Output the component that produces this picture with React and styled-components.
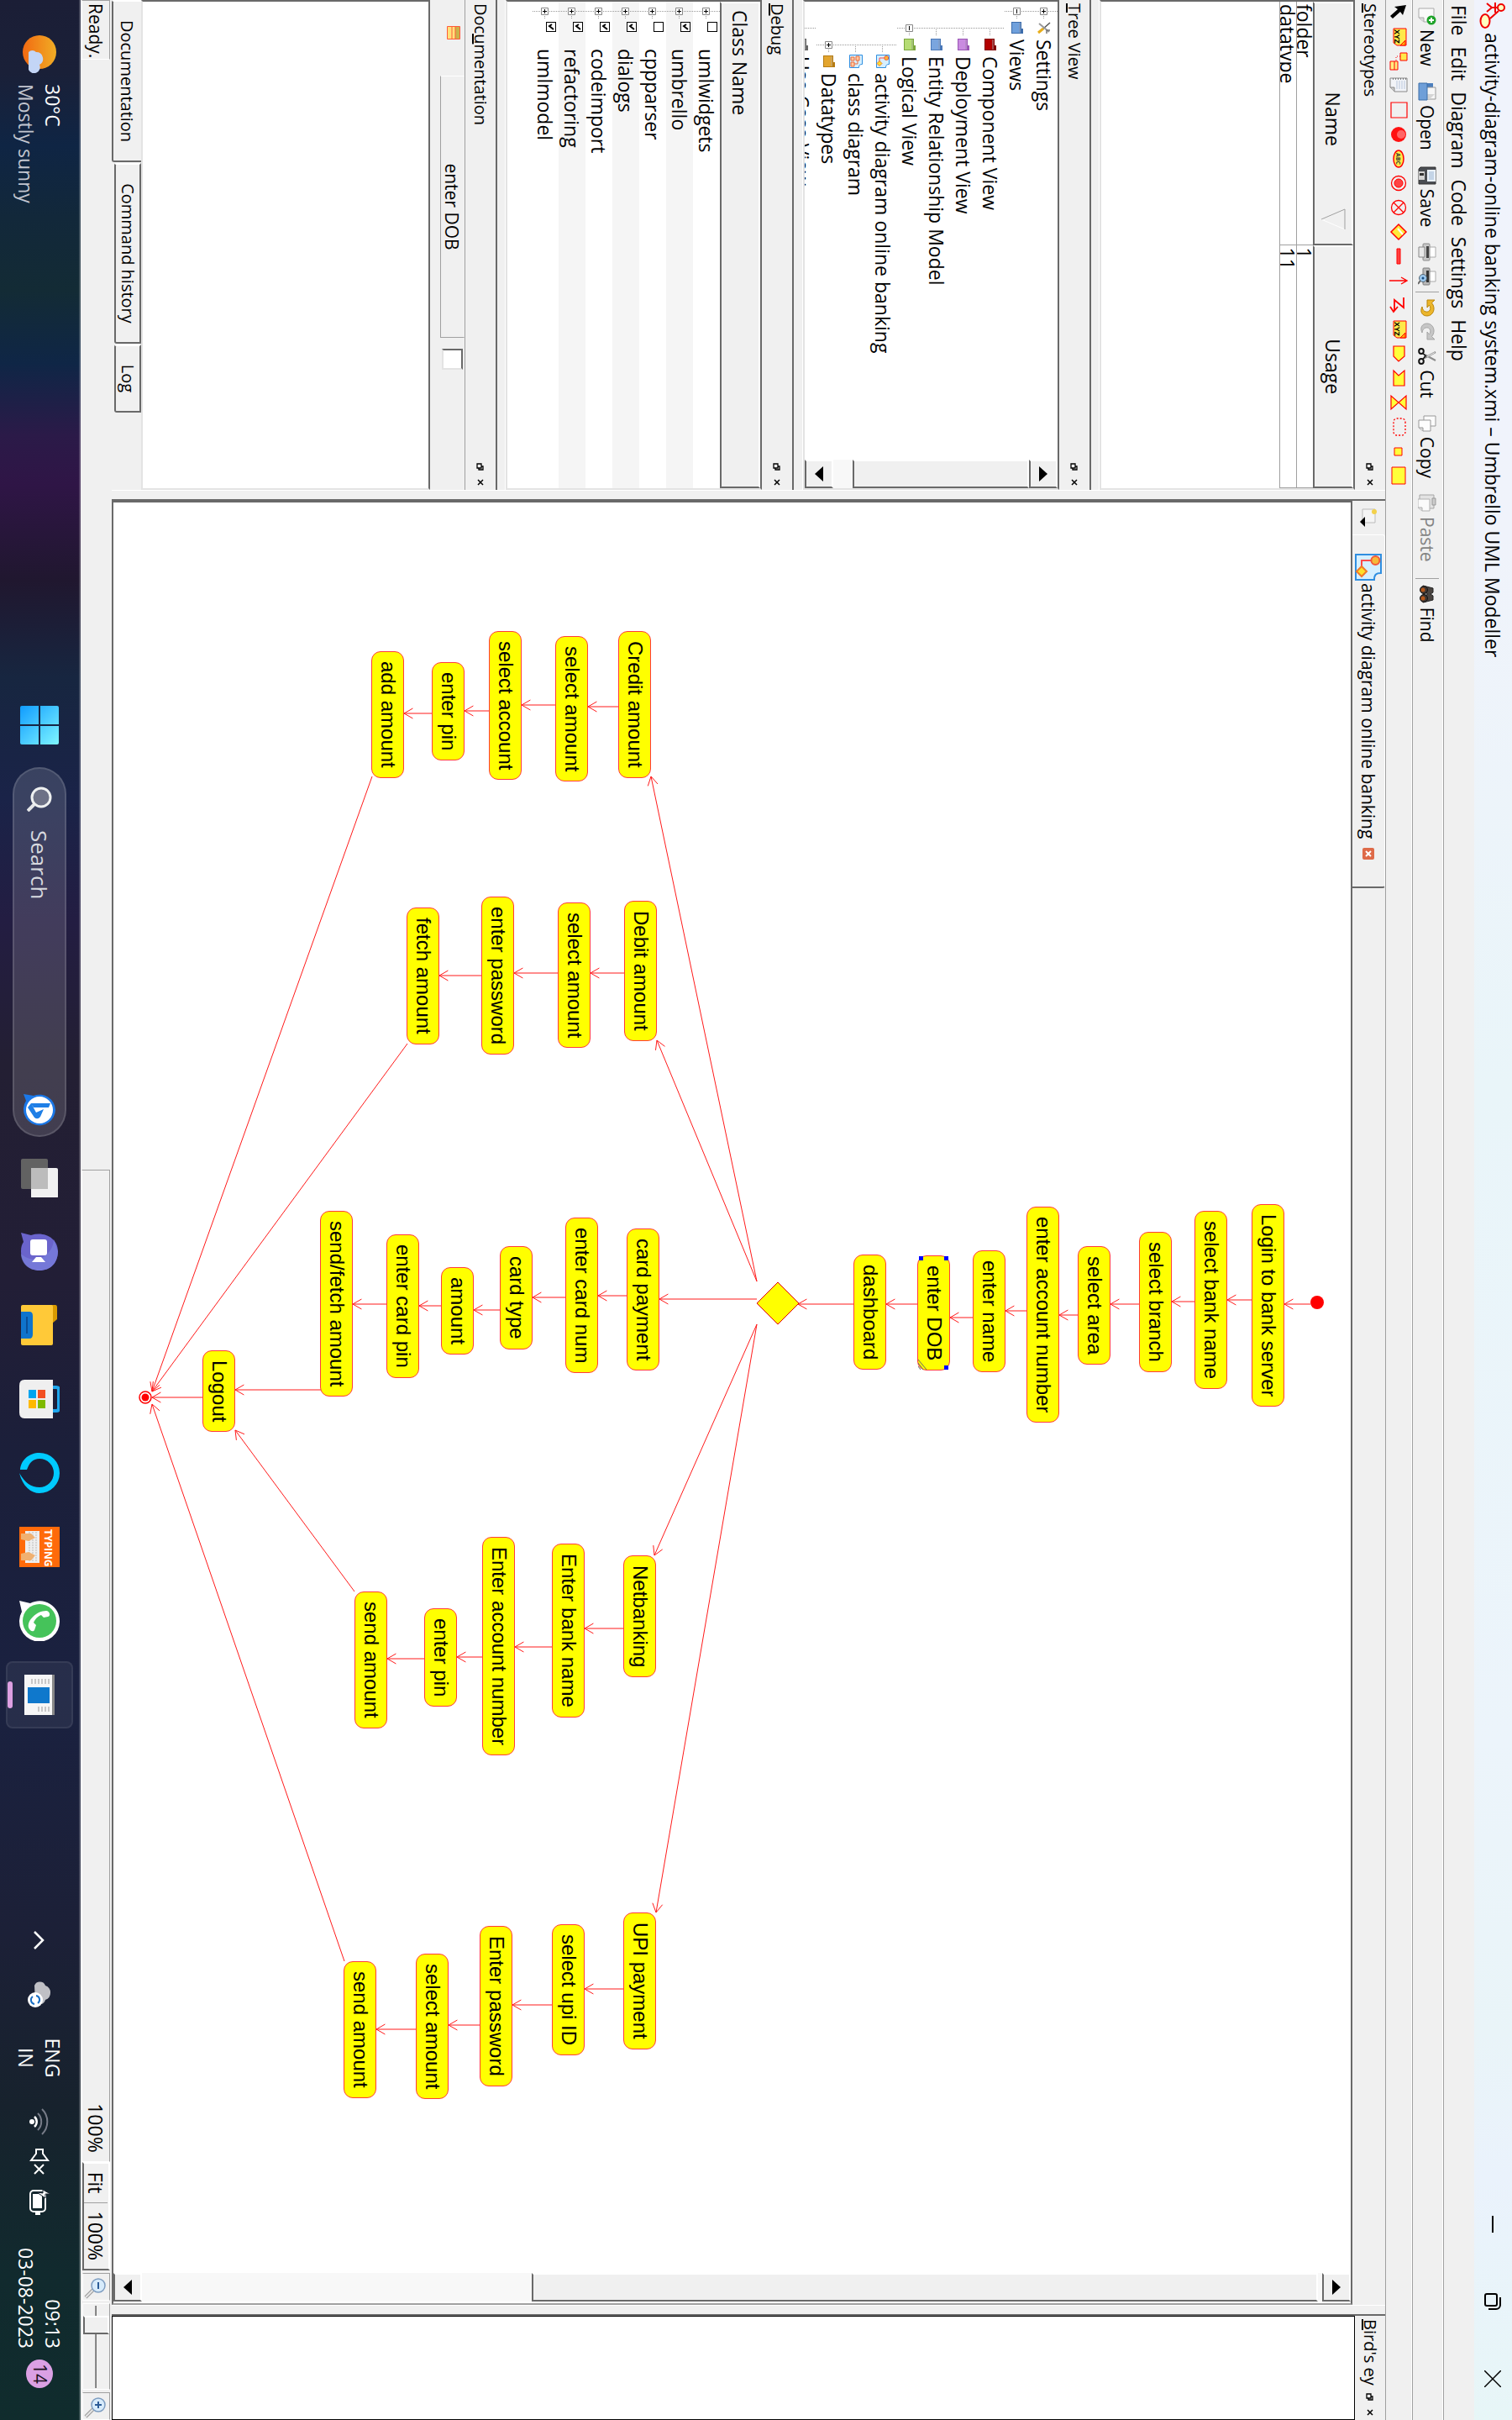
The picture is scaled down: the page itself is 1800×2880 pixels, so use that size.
import React from "react";
import styled, { createGlobalStyle, css } from "styled-components";

const ui = `"Open Sans", "Noto Sans", sans-serif`;
const diagramFont = `"Liberation Sans", Arial, sans-serif`;
const size = { tiny: "20px", small: "21px", base: "23px", large: "26px" };
const c = {
  face: "#f0f0f0",
  light: "#ffffff",
  soft: "#e3e3e3",
  shade: "#a0a0a0",
  dark: "#696969",
};

const GlobalStyle = createGlobalStyle`
  *, *::before, *::after { box-sizing: border-box; }
  html, body { margin: 0; background: ${c.face}; }
  button, input, textarea { font: inherit; color: inherit; margin: 0; padding: 0; border: 0; border-radius: 0; background: none; }
  svg { display: block; flex: none; }
`;

const sunken = css`
  border: 2px solid;
  border-color: ${c.dark} ${c.soft} ${c.soft} ${c.dark};
`;
const raised = css`
  border: 2px solid;
  border-color: ${c.light} ${c.dark} ${c.dark} ${c.light};
  background: ${c.face};
`;

/* ---------- frame of the turned display ---------- */
const Viewport = styled.div`
  width: 100vw;
  height: 100vh;
  overflow: hidden;
`;
const Screen = styled.div`
  width: 100vh;
  height: 100vw;
  transform-origin: 0 0;
  transform: rotate(90deg) translateY(-100%);
  display: flex;
  flex-direction: column;
  font-family: ${ui};
  font-size: ${size.base};
  line-height: 32px;
  color: #000;
  background: ${c.face};
  white-space: nowrap;
`;

/* ---------- title, menu and tool bars ---------- */
const TitleBar = styled.header`
  flex: none;
  height: 45px;
  display: flex;
  align-items: center;
  gap: 5px;
  padding: 0 3px 0 2px;
  background: linear-gradient(90deg, #f0f3fc 0%, #f0f3fb 22%, #e9f5f9 45%, #ecf4fb 72%, #e9f4f8 84%, #eaf2fc 90%, #e7f6f7 100%);
`;
const TitleText = styled.h1`
  flex: 1;
  margin: 0;
  font-size: ${size.base};
  font-weight: 400;
`;
const CaptionGroup = styled.div`
  display: flex;
`;
const CaptionButton = styled.button`
  width: 92px;
  height: 44px;
  display: grid;
  place-items: center;
`;
const MenuBar = styled.nav`
  flex: none;
  height: 37px;
  display: flex;
  align-items: center;
  gap: 13px;
  padding: 0 6px;
  border-bottom: 1px solid ${c.shade};
`;
const ToolBar = styled.div`
  flex: none;
  height: ${(p) => p.$height}px;
  display: flex;
  align-items: center;
  gap: 7px;
  padding: 0 ${(p) => p.$pad}px;
  border-top: 1px solid ${c.light};
  border-bottom: 1px solid ${c.shade};
`;
const ToolButton = styled.button`
  display: flex;
  align-items: center;
  gap: 5px;
  padding-right: ${(p) => (p.$labelled ? 12 : 0)}px;
  font-size: ${size.small};
  color: ${(p) => (p.disabled ? "#838383" : "#000")};
`;
const ToolSeparator = styled.span`
  width: 1px;
  height: 28px;
  background: ${c.shade};
`;

/* ---------- docks ---------- */
const Workspace = styled.main`
  flex: 1;
  min-height: 0;
  display: grid;
  grid-template-columns: 583px 11px minmax(0, 1fr) 11px 126px;
`;
const VSplitter = styled.div`
  border-left: 1px solid ${c.light};
`;
const LeftDocks = styled.aside`
  display: grid;
  min-height: 0;
  grid-template-rows:
    minmax(0, 340fr) 12px minmax(0, 341fr) 13px
    minmax(0, 341fr) 12px minmax(0, 457fr);
`;
const HSplitter = styled.div`
  border-top: 1px solid ${c.light};
  border-bottom: 2px solid ${c.dark};
`;
const DockBox = styled.section`
  display: flex;
  flex-direction: column;
  min-height: 0;
  min-width: 0;
`;
const DockTitle = styled.div`
  flex: none;
  height: 36px;
  display: flex;
  align-items: center;
  padding: 0 4px;
  gap: 9px;
`;
const DockName = styled.h2`
  flex: 1;
  margin: 0;
  min-width: 0;
  font-size: ${size.tiny};
  font-weight: 400;
`;
const IconButton = styled.button`
  display: grid;
  place-items: center;
  width: 10px;
  height: 20px;
`;
const Pane = styled.div`
  flex: 1;
  min-height: 0;
  display: flex;
  flex-direction: ${(p) => (p.$row ? "row" : "column")};
  background: #fff;
  overflow: hidden;
  ${sunken}
`;
const StereoTable = styled.table`
  width: 100%;
  table-layout: fixed;
  border-collapse: separate;
  border-spacing: 0;
`;
const HeadCell = styled.th`
  height: 48px;
  padding: 0;
  width: 50%;
  font-weight: 400;
  ${raised}
`;
const HeadInner = styled.div`
  display: grid;
  grid-template-columns: 32px 1fr 32px;
  align-items: center;
  padding-right: 10px;
`;
const BodyCell = styled.td`
  height: 20px;
  padding: 0 3px;
  line-height: 20px;
  border-bottom: 1px solid ${c.shade};
  border-right: 1px solid ${c.shade};
`;
const CellText = styled.div`
  height: 19px;
  overflow: hidden;
`;
const TreeList = styled.ul`
  flex: 1;
  margin: 0;
  padding: 0;
  list-style: none;
`;
const TreeRow = styled.li`
  height: 32px;
  display: flex;
  align-items: center;
  padding-left: ${(p) => 2 + p.$level * 20}px;
`;
const TreeIcon = styled.span`
  width: 22px;
  margin-left: 2px;
`;
const ClassHeader = styled.div`
  flex: none;
  height: 48px;
  display: flex;
  align-items: center;
  padding-left: 8px;
  ${raised}
`;
const ClassRow = styled.label`
  height: 32px;
  display: flex;
  align-items: center;
  padding-left: 2px;
  background: ${(p) => (p.$alt ? "#f5f5f5" : "#fff")};
`;
const CheckWrap = styled.span`
  display: grid;
  margin: 0 20px 14px 3px;
  & > * { grid-area: 1 / 1; place-self: center; }
`;
const Check = styled.input`
  appearance: none;
  width: 12px;
  height: 12px;
  border: 1px solid #000;
  background: #fff;
  & + svg { visibility: hidden; pointer-events: none; }
  &:checked + svg { visibility: visible; }
`;
const DocHeader = styled.div`
  flex: none;
  height: 42px;
  display: flex;
  align-items: flex-start;
  padding-left: 31px;
  border-top: 1px solid ${c.shade};
`;
const DocIcon = styled.span`
  padding-top: 5px;
  width: 59px;
`;
const DocName = styled.div`
  width: 312px;
  height: 29px;
  line-height: 28px;
  margin-right: 13px;
  text-align: center;
  font-size: ${size.small};
  border: 1px solid;
  border-color: transparent ${c.shade} ${c.shade} ${c.light};
`;
const DocFlag = styled.input`
  appearance: none;
  width: 25px;
  height: 25px;
  margin-top: 2px;
  background: #fff;
  ${sunken}
`;
const DocText = styled.textarea`
  flex: 1;
  width: 100%;
  resize: none;
  background: #fff;
  ${sunken}
`;
const DockTabs = styled.div`
  flex: none;
  height: 35px;
  display: flex;
  align-items: flex-start;
  gap: 1px;
`;
const DockTab = styled.button`
  height: ${(p) => (p.$active ? 35 : 32)}px;
  padding: 0 22px;
  line-height: 28px;
  font-size: ${size.tiny};
  border: 2px solid ${c.dark};
  border-top-width: ${(p) => (p.$active ? 0 : 2)}px;
  border-left-color: ${c.light};
  border-radius: 0 0 3px 3px;
`;

/* ---------- scroll bars ---------- */
const ScrollColumn = styled.div`
  flex: none;
  width: 34px;
  display: flex;
  flex-direction: column;
  background: #f8f8f8;
`;
const ScrollButton = styled.button`
  flex: none;
  height: 34px;
  display: grid;
  place-items: center;
  ${raised}
`;
const ScrollThumb = styled.div`
  flex: ${(p) => p.$part};
  margin-top: ${(p) => p.$top}px;
  ${raised}
`;
const ScrollRest = styled.div`
  flex: ${(p) => p.$part};
`;

/* ---------- diagram ---------- */
const Center = styled.section`
  display: flex;
  flex-direction: column;
  min-height: 0;
  border-left: 2px solid ${c.dark};
`;
const TabStrip = styled.div`
  flex: none;
  height: 39px;
  display: flex;
  align-items: stretch;
`;
const NewDiagram = styled.button`
  width: 40px;
  display: grid;
  place-items: center;
`;
const DiagramTab = styled.div`
  width: 421px;
  display: flex;
  align-items: center;
  padding-left: 22px;
  gap: 3px;
  font-size: ${size.small};
  border-top: 1px solid ${c.light};
  border-left: 1px solid ${c.light};
  border-right: 2px solid ${c.dark};
  border-radius: 3px 3px 0 0;
`;
const CloseTab = styled.button`
  margin-left: 8px;
  width: 14px;
  height: 14px;
`;
const CanvasFrame = styled.div`
  flex: 1;
  min-height: 0;
  display: flex;
  padding-right: 2px;
  border: 2px solid;
  border-color: ${c.dark} ${c.shade} ${c.dark} ${c.dark};
  background: #fff;
`;
const Canvas = styled.div`
  position: relative;
  flex: 1;
  overflow: hidden;
  font-family: ${diagramFont};
  font-size: 24px;
`;
const Edges = styled.svg`
  position: absolute;
  inset: 0;
  overflow: visible;
`;
const Activity = styled.div`
  position: absolute;
  left: ${(p) => p.$x - 598}px;
  top: ${(p) => p.$y - 192}px;
  height: 39px;
  padding: 0 11px;
  line-height: 36px;
  border: 1px solid #ff3b3b;
  border-radius: 11px;
  background: #ffff00;
`;
const Handle = styled.i`
  position: absolute;
  width: 5px;
  height: 5px;
  background: #00f;
  ${(p) => p.$v}: 1px;
  ${(p) => p.$h}: 0;
`;
const Grip = styled.svg`
  position: absolute;
  right: 0;
  bottom: 0;
`;

const BirdView = styled.div`
  flex: 1;
  background: #fff;
  border: 1px solid #000;
`;
const BirdDock = styled(DockBox)`
  border-left: 2px solid ${c.dark};
`;

/* ---------- status bar ---------- */
const StatusBar = styled.footer`
  flex: none;
  height: 37px;
  display: flex;
  align-items: center;
  gap: 3px;
  padding: 2px 0;
`;
const StatusField = styled.div`
  height: 34px;
  display: flex;
  align-items: center;
  justify-content: ${(p) => (p.$end ? "flex-end" : "flex-start")};
  padding: 0 ${(p) => (p.$end ? 10 : 1)}px 0 3px;
  margin-left: ${(p) => (p.$end ? "auto" : 0)};
  width: ${(p) => (p.$end ? "41%" : "auto")};
  font-size: ${(p) => (p.$end ? size.base : size.small)};
  border: 1px solid;
  border-color: ${c.shade} ${c.light} ${c.light} ${c.shade};
`;
const ZoomGroup = styled.div`
  height: 33px;
  display: flex;
  align-items: center;
  gap: 10px;
  padding: 0 10px;
  margin-left: -3px;
  ${raised}
`;
const ZoomButton = styled.button`
  width: 33px;
  height: 33px;
  display: grid;
  place-items: center;
  border: 1px solid;
  border-color: ${c.shade} ${c.light} ${c.light} ${c.shade};
`;
const ZoomSlider = styled.input`
  appearance: none;
  width: 103px;
  height: 33px;
  border: 1px solid ${c.light};
  border-top-color: ${c.shade};
  background: linear-gradient(${c.dark}, ${c.shade}) center / 98px 2px no-repeat;
  &::-webkit-slider-thumb {
    appearance: none;
    width: 22px;
    height: 31px;
    ${raised}
  }
`;

/* ---------- task bar ---------- */
const TaskBar = styled.footer`
  flex: none;
  height: 96px;
  display: grid;
  grid-template-columns: 1fr auto 1fr;
  align-items: center;
  border-top: 2px solid rgba(255, 255, 255, 0.2);
  color: #fff;
  background: linear-gradient(
    90deg, #1b1e36 0, #1a2038 3%, #0f2544 6%, #12283a 9%, #132b35 12%, #0f2646 15%,
    #2b1a48 18%, #2f1546 20%, #20172f 24%, #172640 28%, #1a2348 33%, #231d42 38%,
    #231f33 44%, #221e36 53%, #1b1f3a 60%, #1a2140 70%, #1c2037 80%, #17222d 87%, #112a2e 94%, #102c2d 100%
  );
`;
const Weather = styled.button`
  display: flex;
  align-items: center;
  gap: 13px;
  padding-left: 41px;
  text-align: left;
`;
const Stacked = styled.span`
  display: flex;
  flex-direction: column;
  align-items: ${(p) => p.$align || "flex-start"};
`;
const Faint = styled.span`
  color: #c2c5cf;
`;
const TaskIcons = styled.div`
  display: flex;
  align-items: center;
`;
const TaskButton = styled.button`
  position: relative;
  width: 80px;
  height: 80px;
  margin: 0 4px;
  display: grid;
  place-items: center;
  border-radius: 8px;
  border: 2px solid ${(p) => (p.$active ? "rgba(255,255,255,0.07)" : "transparent")};
  background: ${(p) => (p.$active ? "rgba(255,255,255,0.06)" : "none")};
`;
const Indicator = styled.i`
  position: absolute;
  left: 50%;
  bottom: 0;
  width: 32px;
  height: 6px;
  margin-left: -16px;
  border-radius: 3px;
  background: #dd9fe2;
`;
const SearchBox = styled.label`
  width: 440px;
  height: 64px;
  margin: 0 4px 0 6px;
  display: flex;
  align-items: center;
  padding: 0 10px 0 21px;
  border-radius: 32px;
  border: 2px solid rgba(255, 255, 255, 0.13);
  background: rgba(255, 255, 255, 0.14);
`;
const SearchInput = styled.input`
  flex: 1;
  min-width: 0;
  margin-left: 22px;
  font-size: ${size.large};
  outline: 0;
  &::placeholder { color: #d6d8de; opacity: 1; }
`;
const Tray = styled.div`
  display: flex;
  align-items: center;
  justify-content: flex-end;
  padding-right: 38px;
`;
const TrayItem = styled.button`
  display: grid;
  align-items: center;
  justify-items: ${(p) => (p.$end ? "end" : "center")};
  width: ${(p) => p.$w}px;
  margin-right: ${(p) => p.$after || 0}px;
`;
const Badge = styled.span`
  width: 34px;
  height: 32px;
  margin-left: 13px;
  border-radius: 50%;
  font-size: ${size.small};
  line-height: 31px;
  text-align: center;
  color: #1c1020;
  background: #dba0e4;
`;

/* ---------- icon drawings ---------- */
const Svg = ({ w = 22, h = w, box, children }) => (
  <svg width={w} height={h} viewBox={box || `0 0 ${w} ${h}`} fill="none" aria-hidden="true">
    {children}
  </svg>
);
const toolIcons = {
  new: (
    <Svg>
      <path d="M2 3h16v12l-5 6H2z" fill="#fafafa" stroke="#aaa" />
      <path d="M18 15h-5v6" fill="#ddd" stroke="#aaa" />
      <circle cx="16" cy="6" r="5.5" fill="#1fa32a" />
      <path d="M16 3v6M13 6h6" stroke="#fff" strokeWidth="2" />
    </Svg>
  ),
  open: (
    <Svg>
      <path d="M1 4h6v16H1z" fill="#4c7fbd" />
      <path d="M6 1h14v12H6z" fill="#f6f6f6" stroke="#999" />
      <path d="M14 2l6 6v5h-6z" fill="#d5d5d5" />
      <path d="M1 11h20v10H1z" fill="#6f9fd8" stroke="#3d6ea8" />
    </Svg>
  ),
  save: (
    <Svg>
      <path d="M1 1h20v20H3l-2-2z" fill="#4a4d52" stroke="#333" />
      <path d="M4 1h14v10H4z" fill="#eaf1f9" />
      <path d="M6 4h10M6 6h10M6 8h10" stroke="#9db7d4" />
      <path d="M6 14h10v7H6z" fill="#d4d4d4" />
      <path d="M8 15h3v5H8z" fill="#333" />
    </Svg>
  ),
  print: (
    <Svg>
      <path d="M5 1h12v8H5z" fill="#fff" stroke="#aaa" />
      <rect x="1" y="8" width="20" height="8" rx="1" fill="#c9c9c9" stroke="#8a8a8a" />
      <path d="M4 9h14v3H4z" fill="#444" />
      <path d="M5 14h12v7H5z" fill="#e9e9e9" stroke="#888" />
    </Svg>
  ),
  preview: (
    <Svg>
      <path d="M5 1h12v8H5z" fill="#fff" stroke="#aaa" />
      <rect x="1" y="8" width="20" height="8" rx="1" fill="#b9b9b9" stroke="#7d7d7d" />
      <path d="M4 9h14v3H4z" fill="#333" />
      <circle cx="13" cy="16" r="4.5" fill="#9cc8ee" stroke="#55646f" />
      <circle cx="13" cy="16" r="1.5" fill="#164a80" />
      <path d="M16 19l4 3" stroke="#666" strokeWidth="2" />
    </Svg>
  ),
  undo: (
    <Svg>
      <path d="M2 2v9h9L8 8.500c4-3 9-.5 8 4-.6 2.800-3 4.200-6 4.500 6 3 11 0 11-6C21 4 12 0 5.500 5.500z" fill="#ecb62b" stroke="#b9850c" />
    </Svg>
  ),
  redo: (
    <Svg>
      <path d="M20 2v9h-9l3-2.500c-4-3-9-.5-8 4 .6 2.800 3 4.200 6 4.500-6 3-11 0-11-6C1 4 10 0 16.500 5.500z" fill="#c6c6c6" stroke="#a5a5a5" />
    </Svg>
  ),
  cut: (
    <Svg>
      <path d="M6 1l7 13M16 1L9 14" stroke="#8c8c8c" strokeWidth="2" />
      <path d="M6.500 2l5 9" stroke="#eee" />
      <ellipse cx="5" cy="18" rx="3" ry="2.800" stroke="#111" strokeWidth="2" />
      <ellipse cx="17" cy="18" rx="3" ry="2.800" stroke="#111" strokeWidth="2" />
      <path d="M7.500 16l3-3 4 3" stroke="#111" strokeWidth="1.500" />
    </Svg>
  ),
  copy: (
    <Svg>
      <path d="M2 1h12v14H2z" fill="#fbfbfb" stroke="#999" />
      <path d="M7 7h13v9l-4 5H7z" fill="#fdfdfd" stroke="#999" />
      <path d="M20 16h-4v5" fill="#ddd" stroke="#999" />
    </Svg>
  ),
  paste: (
    <Svg>
      <path d="M1 3h16v17H1z" fill="#e3e3e3" stroke="#a5a5a5" />
      <path d="M5 1h8v4H5z" fill="#ccc" stroke="#999" />
      <path d="M6 8h14v9l-4 5H6z" fill="#fafafa" stroke="#b1b1b1" />
      <path d="M20 17h-4v5" fill="#ddd" stroke="#b1b1b1" />
    </Svg>
  ),
  find: (
    <Svg>
      <path d="M4 4h5l2 3 2-3h5l3 12H12V11h-2v5H1z" fill="#4a4440" stroke="#222" />
      <circle cx="6" cy="15" r="4.500" fill="#3c3632" stroke="#171412" />
      <circle cx="16" cy="15" r="4.500" fill="#3c3632" stroke="#171412" />
      <circle cx="6" cy="16" r="2.500" fill="#b4571c" />
      <circle cx="16" cy="16" r="2.500" fill="#b4571c" />
    </Svg>
  ),
};
const R = "#ff0000";
const Xyz = () => (
  <>
    <path d="M1 2h20v11l-3 4H1z" fill="#ffe94a" stroke={R} />
    <path d="M15 3h6v6z" fill="#ffb000" stroke={R} />
    <text x="2" y="16" fontSize="9" fontWeight="700" fill="#000">XYZ</text>
  </>
);
const shapes = [
  ["Select", <path d="M2 2l12 4-4 3 8 9-3 3-8-9-3 4z" fill="#000" />],
  ["Note text", <Xyz />],
  ["Anchor", <g><path d="M1 1h9v8H1z" fill="#ffe94a" stroke={R} /><path d="M5 9v5h6" stroke={R} strokeDasharray="1 2" /><path d="M11 12h10v9H11z" fill="#ffee80" stroke={R} /><path d="M11 16h10" stroke={R} /></g>],
  ["Note", <g><path d="M2 1h16v15l-5 5H2z" fill="#f2f4f8" stroke="#888" /><path d="M5 4h10M5 7h10M5 10h10M5 13h10" stroke="#b9c6dc" /><path d="M3 2v18" stroke="#222" strokeDasharray="1 2" /><path d="M18 16h-5v5" fill="#ccc" stroke="#888" /></g>],
  ["Box", <path d="M2 1h18v19H2z" stroke={R} strokeWidth="1.200" />],
  ["Initial", <g><circle cx="11" cy="11" r="9" fill="#f11" /><circle cx="11" cy="8" r="5" fill="#ff7a7a" opacity=".8" /></g>],
  ["Activity", <g><ellipse cx="11" cy="11" rx="10" ry="6" fill="#ffe94a" stroke={R} strokeWidth="1.500" /><text x="4" y="14" fontSize="7" fontWeight="700" fill="#333">ABC</text></g>],
  ["End", <g><circle cx="11" cy="11" r="8.500" stroke={R} strokeWidth="1.300" /><circle cx="11" cy="11" r="5" fill="#f44" stroke={R} /></g>],
  ["Final", <g><circle cx="11" cy="11" r="8.500" stroke={R} strokeWidth="1.300" /><path d="M5 5l12 12M17 5L5 17" stroke={R} strokeWidth="1.300" /></g>],
  ["Branch", <g><path d="M11 2l9 9-9 9-9-9z" fill="#ffe93a" stroke={R} strokeWidth="1.500" /><path d="M7 12l7-6" stroke="#fff" strokeWidth="2" /></g>],
  ["Fork", <path d="M2 9h18v4H2z" fill="#ff4040" stroke={R} />],
  ["Transition", <path d="M11 22V1M7 8l4-7 4 7" stroke={R} strokeWidth="1.400" />],
  ["Exception", <path d="M2 5h12L5 16h13M13 12l6 5-6 4" stroke={R} strokeWidth="1.800" />],
  ["Precondition", <Xyz />],
  ["Send signal", <path d="M2 4h12l6 7-6 6H2z" fill="#ffff3a" stroke={R} strokeWidth="1.200" />],
  ["Accept signal", <path d="M2 4h18v13H2l6-6z" fill="#ffff3a" stroke={R} strokeWidth="1.200" />],
  ["Time event", <path d="M3 2h16L3 20h16z" fill="#ffff3a" stroke={R} strokeWidth="1.200" />],
  ["Region", <rect x="1" y="3" width="20" height="14" rx="4" stroke={R} strokeWidth="1.300" strokeDasharray="2 2" />],
  ["Pin", <path d="M7 7h9v9H7z" fill="#ffff3a" stroke={R} />],
  ["Object node", <path d="M1 3h20v16H1z" fill="#ffff3a" stroke={R} />],
];
const Float = () => (
  <Svg w={9}><path d="M1 3h5v5H1zM4 3V1h4v5H6" stroke="#000" strokeWidth="1.300" /></Svg>
);
const Cross = () => (
  <Svg w={8}><path d="M1 1l6 6M7 1L1 7" stroke="#000" strokeWidth="1.500" /></Svg>
);
const Arrow = ({ down }) => (
  <Svg w={18} h={10}><path d={down ? "M0 0h18L9 10z" : "M0 10h18L9 0z"} fill="#000" /></Svg>
);
const Expander = ({ open, blank }) => (
  <Svg w={19} h={32}>
    <path d="M9.500 0v32M9 16.500h10" stroke="#999" strokeDasharray="1 1" />
    {!blank && <path d="M5.500 12.500h8v8h-8z" fill="#fff" stroke="#888" />}
    {!blank && <path d={open ? "M7 16.500h5" : "M7 16.500h5M9.500 14v5"} stroke="#000" />}
  </Svg>
);
const Folder = ({ fill, edge }) => (
  <Svg w={16}>
    <path d="M1 3h8V1h6v14H1z" fill={edge} />
    <path d="M2 6h12v8H2z" fill={fill} />
    <path d="M2 5h12" stroke="#fff" opacity=".6" />
  </Svg>
);
const DiagramIcon = ({ w = 16 }) => (
  <Svg w={w} box="0 0 16 16">
    <path d="M.5.5h11c0 3 1 4 4 4v11H.5z" fill="#d5efff" stroke="#2f8ee0" />
    <circle cx="4" cy="3.800" r="2.500" fill="#f6b93a" stroke="#f25a3a" />
    <path d="M4 6.500V12h4" stroke="#ff4a4a" />
    <path d="M10.500 9l3 3-3 3-3-3z" fill="#ffe02a" stroke="#f07a2a" />
  </Svg>
);
const ClassIcon = () => (
  <Svg w={16}>
    <path d="M.5.5h11c0 3 1 4 4 4v11H.5z" fill="#d5efff" stroke="#2f8ee0" />
    <path d="M2 4h5v4H2zM9 10h5v4H9zM3 10h4v4H3z" fill="#ffc9a0" stroke="#ec6a3a" />
    <path d="M7 6h4v4" stroke="#ec6a3a" />
  </Svg>
);
const Tools = () => (
  <Svg w={16}>
    <path d="M2 1l8 9" stroke="#555" strokeWidth="1.500" />
    <path d="M9 9l5 6" stroke="#e8ae1c" strokeWidth="3" />
    <path d="M13 2L3 14" stroke="#999" strokeWidth="2" />
    <path d="M11 1v4h4" stroke="#777" strokeWidth="1.500" />
  </Svg>
);
const Magnifier = ({ plus }) => (
  <Svg w={28}>
    <path d="M17 17l9 9" stroke="#999" strokeWidth="4" />
    <path d="M17 17l9 9" stroke="#e5e5e5" strokeWidth="2" />
    <circle cx="12" cy="11" r="8" fill="#d7ebfb" stroke="#7c9cc0" strokeWidth="1.500" />
    <path d={plus ? "M8 11h8M12 7v8" : "M8 11h8"} stroke="#2b5c98" strokeWidth="2" />
  </Svg>
);

/* ---------- data ---------- */
const menus = ["File", "Edit", "Diagram", "Code", "Settings", "Help"];
const tools = [
  ["new", "New"], ["open", "Open"], ["save", "Save"], ["print"], ["preview"], null,
  ["undo"], ["redo"], ["cut", "Cut"], ["copy", "Copy"], ["paste", "Paste"], null, ["find", "Find"],
];
const tree = [
  [0, "closed", <Tools />, "Settings"],
  [0, "open", <Folder fill="#6fa0dc" edge="#3c6cab" />, "Views"],
  [1, "", <Folder fill="#b30000" edge="#800000" />, "Component View"],
  [1, "", <Folder fill="#c98be0" edge="#9a55b5" />, "Deployment View"],
  [1, "", <Folder fill="#7aa5de" edge="#4a78b8" />, "Entity Relationship Model"],
  [1, "open", <Folder fill="#b5dc74" edge="#7ba63c" />, "Logical View"],
  [2, "", <DiagramIcon />, "activity diagram online banking"],
  [2, "", <ClassIcon />, "class diagram"],
  [2, "closed", <Folder fill="#e3a52e" edge="#b57b12" />, "Datatypes"],
  [1, "", <Folder fill="#9a9a9a" edge="#666" />, "Use Case View"],
];
const classes = [
  ["umlwidgets", false], ["umbrello", true], ["cppparser", false], ["dialogs", true],
  ["codeimport", true], ["refactoring", true], ["umlmodel", true],
];
const nodes = [
  [1433, 271, "Login to bank server"], [1441, 339, "select bank name"], [1466, 405, "select branch"],
  [1483, 478, "select area"], [1436, 539, "enter account number"], [1488, 603, "enter name"],
  [1494, 669, "enter DOB", true], [1493, 745, "dashboard"],
  [751, 1025, "Credit amount"], [757, 1100, "select amount"], [751, 1179, "select account"],
  [788, 1247, "enter pin"], [775, 1319, "add amount"],
  [1072, 1018, "Debit amount"], [1074, 1097, "select amount"], [1067, 1188, "enter password"],
  [1080, 1277, "fetch amount"],
  [1462, 1015, "card payment"], [1449, 1088, "enter card num"], [1483, 1166, "card type"],
  [1508, 1236, "amount"], [1469, 1301, "enter card pin"], [1441, 1380, "send/fetch amount"],
  [1607, 1520, "Logout"],
  [1851, 1019, "Netbanking"], [1837, 1104, "Enter bank name"], [1829, 1187, "Enter account number"],
  [1914, 1256, "enter pin"], [1894, 1339, "send amount"],
  [2276, 1019, "UPI payment"], [2290, 1104, "select upi ID"], [2292, 1190, "Enter password"],
  [2325, 1266, "select amount"], [2334, 1352, "send amount"],
];
const edges = [
  [1552, 240, 1552, 271], [1547, 309, 1547, 339], [1549, 377, 1549, 405], [1552, 443, 1552, 478],
  [1565, 516, 1565, 539], [1560, 577, 1560, 603], [1568, 641, 1568, 669], [1552, 707, 1552, 745],
  [1552, 783, 1552, 850], [1546, 899, 1546, 1015],
  [1542, 1053, 1542, 1088], [1544, 1126, 1544, 1166], [1559, 1204, 1559, 1236], [1554, 1274, 1554, 1301],
  [1552, 1339, 1552, 1380], [1654, 1418, 1654, 1520], [1663, 1558, 1663, 1619],
  [841, 1063, 841, 1100], [839, 1139, 839, 1179], [846, 1218, 846, 1247], [849, 1286, 849, 1319],
  [1158, 1056, 1158, 1097], [1158, 1135, 1158, 1188], [1161, 1227, 1161, 1277],
  [1938, 1058, 1938, 1104], [1960, 1142, 1960, 1187], [1972, 1225, 1972, 1256], [1974, 1295, 1974, 1339],
  [2367, 1058, 2367, 1104], [2386, 1142, 2386, 1190], [2410, 1229, 2410, 1266], [2415, 1304, 2415, 1352],
  [1525, 899, 924, 1025], [1525, 899, 1238, 1018], [1576, 899, 1851, 1021], [1576, 899, 2276, 1019],
  [924, 1357, 1656, 1619], [1242, 1315, 1656, 1619], [1894, 1378, 1702, 1520], [2334, 1390, 1671, 1619],
];
const edgePath = ([x1, y1, x2, y2]) => {
  const a = Math.atan2(y2 - y1, x2 - x1);
  const wing = (d) => `${x2 - 12 * Math.cos(a + d)} ${y2 - 12 * Math.sin(a + d)}`;
  return `M${x1} ${y1}L${x2} ${y2}M${wing(0.52)}L${x2} ${y2}L${wing(-0.52)}`;
};

const Dock = ({ title, as: Box = DockBox, children }) => (
  <Box>
    <DockTitle>
      <DockName>{title}</DockName>
      <IconButton aria-label="Float"><Float /></IconButton>
      <IconButton aria-label="Close"><Cross /></IconButton>
    </DockTitle>
    {children}
  </Box>
);

const ScrollBar = ({ top = 0, thumb, rest }) => (
  <ScrollColumn>
    <ScrollButton aria-label="Scroll up"><Arrow /></ScrollButton>
    <ScrollThumb $part={thumb} $top={top} />
    <ScrollRest $part={rest} />
    <ScrollButton aria-label="Scroll down"><Arrow down /></ScrollButton>
  </ScrollColumn>
);

const Header = () => (
  <>
    <TitleBar>
      <Svg w={32}>
        <g stroke="#f00000" strokeWidth="2">
          <circle cx="7" cy="6" r="4" fill="#ffffc0" />
          <path d="M7 10v7M1 13h12M7 17l-5 6M7 17l5 6M11 9l9 10" />
          <ellipse cx="23" cy="25" rx="8" ry="5.500" fill="#ffffc0" />
        </g>
      </Svg>
      <TitleText>activity-diagram-online banking system.xmi – Umbrello UML Modeller</TitleText>
      <CaptionGroup>
        <CaptionButton aria-label="Minimize"><Svg w={20} h={2}><path d="M0 1h20" stroke="#000" strokeWidth="2" /></Svg></CaptionButton>
        <CaptionButton aria-label="Restore">
          <Svg w={20}><rect x="1" y="5" width="14" height="14" rx="2" stroke="#000" strokeWidth="2" /><path d="M5 1h9a5 5 0 0 1 5 5v9" stroke="#000" strokeWidth="2" /></Svg>
        </CaptionButton>
        <CaptionButton aria-label="Close window"><Svg w={20}><path d="M0 0l20 20M20 0L0 20" stroke="#000" strokeWidth="1.500" /></Svg></CaptionButton>
      </CaptionGroup>
    </TitleBar>
    <MenuBar>{menus.map((m) => <button key={m}>{m}</button>)}</MenuBar>
    <ToolBar $height={37} $pad={8}>
      {tools.map((t, i) =>
        t ? (
          <ToolButton key={i} aria-label={t[0]} $labelled={!!t[1]} disabled={t[0] === "paste"}>
            {toolIcons[t[0]]}{t[1]}
          </ToolButton>
        ) : <ToolSeparator key={i} />
      )}
    </ToolBar>
    <ToolBar $height={32} $pad={4}>
      {shapes.map(([name, art]) => (
        <ToolButton key={name} aria-label={name}><Svg>{art}</Svg></ToolButton>
      ))}
    </ToolBar>
  </>
);

const Docks = () => (
  <LeftDocks>
    <Dock title={<><u>S</u>tereotypes</>}>
      <Pane>
        <StereoTable>
          <thead>
            <tr>
              <HeadCell>
                <HeadInner>
                  <span /><span>Name</span>
                  <Svg w={26} h={30}><path d="M25 1L13 29" stroke="#fff" /><path d="M25 1H1l12 28" stroke="#a0a0a0" /></Svg>
                </HeadInner>
              </HeadCell>
              <HeadCell>Usage</HeadCell>
            </tr>
          </thead>
          <tbody>
            {[["folder", 1], ["datatype", 11]].map(([n, u]) => (
              <tr key={n}>
                <BodyCell><CellText>{n}</CellText></BodyCell>
                <BodyCell><CellText>{u}</CellText></BodyCell>
              </tr>
            ))}
          </tbody>
        </StereoTable>
      </Pane>
    </Dock>
    <HSplitter />
    <Dock title={<><u>T</u>ree View</>}>
      <Pane $row>
        <TreeList>
          {tree.map(([level, state, icon, name]) => (
            <TreeRow key={name} $level={level}>
              <Expander open={state === "open"} blank={!state} />
              <TreeIcon>{icon}</TreeIcon>{name}
            </TreeRow>
          ))}
        </TreeList>
        <ScrollBar thumb={211} rest={24} />
      </Pane>
    </Dock>
    <HSplitter />
    <Dock title={<><u>D</u>ebug</>}>
      <Pane>
        <ClassHeader>Class Name</ClassHeader>
        {classes.map(([name, on], i) => (
          <ClassRow key={name} $alt={i % 2 === 1}>
            <Expander />
            <CheckWrap>
              <Check type="checkbox" defaultChecked={on} />
              <Svg w={8}><path d="M1 3l2 3 4-5" stroke="#000" strokeWidth="2" /></Svg>
            </CheckWrap>
            {name}
          </ClassRow>
        ))}
      </Pane>
    </Dock>
    <HSplitter />
    <Dock title={<>Doc<u>u</u>mentation</>}>
      <DocHeader>
        <DocIcon><Svg w={16}><path d="M.5.5h15v15H.5z" fill="#ffe27a" stroke="#ff5a3a" /><path d="M1 1h14v5H1z" fill="#c9b24a" /><path d="M1 6h14M1 10h14" stroke="#ff5a3a" /></Svg></DocIcon>
        <DocName>enter DOB</DocName>
        <DocFlag type="checkbox" aria-label="Modified" />
      </DocHeader>
      <DocText aria-label="Documentation text" />
      <DockTabs>
        <DockTab $active>Documentation</DockTab>
        <DockTab>Command history</DockTab>
        <DockTab>Log</DockTab>
      </DockTabs>
    </Dock>
  </LeftDocks>
);

const Diagram = () => (
  <Center>
    <TabStrip>
      <NewDiagram aria-label="New diagram">
        <Svg w={24}><path d="M2 4h16v15H2z" fill="#f5f5f5" stroke="#bbb" /><circle cx="5" cy="5" r="3" fill="#f3d14a" /><path d="M11 16h12l-6 6z" fill="#000" /></Svg>
      </NewDiagram>
      <DiagramTab>
        <DiagramIcon w={32} />
        activity diagram online banking
        <CloseTab aria-label="Close diagram"><Svg w={14}><rect width="14" height="14" rx="2" fill="#de6a48" /><path d="M4 4l6 6M10 4l-6 6" stroke="#fff" strokeWidth="2" /></Svg></CloseTab>
      </DiagramTab>
    </TabStrip>
    <CanvasFrame>
      <Canvas>
        <Edges width="2107" height="1472" viewBox="598 192 2107 1472" fill="none">
          <path d={edges.map(edgePath).join("")} stroke="#ff1a1a" />
          <path d="M1551 849l25 25-25 25-25-25z" fill="#ff0" stroke="#e00000" />
          <circle cx="1550" cy="232" r="8" fill="#f00" />
          <circle cx="1663" cy="1627" r="7" stroke="#f00" strokeWidth="1.500" />
          <circle cx="1663" cy="1627" r="4.500" fill="#f00" />
        </Edges>
        {nodes.map(([x, y, text, selected]) => (
          <Activity key={`${x}-${y}`} $x={x} $y={y}>
            {text}
            {selected && (
              <>
                <Handle $v="top" $h="left" /><Handle $v="top" $h="right" /><Handle $v="bottom" $h="left" />
                <Grip width="14" height="12"><path d="M2 12L14 2M6 12l8-6M10 12l4-3" stroke="#666" /></Grip>
              </>
            )}
          </Activity>
        ))}
      </Canvas>
      <ScrollBar top={5} thumb={932} rest={464} />
    </CanvasFrame>
  </Center>
);

const Status = () => (
  <StatusBar>
    <StatusField>Ready.</StatusField>
    <StatusField $end>100%</StatusField>
    <ZoomGroup><button>Fit</button><ToolSeparator /><button>100%</button></ZoomGroup>
    <ZoomButton aria-label="Zoom out"><Magnifier /></ZoomButton>
    <ZoomSlider type="range" defaultValue="18" aria-label="Zoom" />
    <ZoomButton aria-label="Zoom in"><Magnifier plus /></ZoomButton>
  </StatusBar>
);

const apps = [
  ["Task view", <Svg w={48}><rect x="2" y="14" width="36" height="32" rx="2" fill="#626262" /><rect x="13" y="2" width="36" height="32" rx="2" fill="#f1f1f1" /><path d="M13 14h25v20H13z" fill="#bcbcbc" /></Svg>],
  ["Chat", <Svg w={48}><path d="M24 2c14 0 23 9 23 22s-9 22-23 22c-5 0-8-1-11-3L2 46l3-12C0 18 9 2 24 2z" fill="#6a64cc" /><path d="M24 2c14 0 23 9 23 22s-9 22-20 22C42 30 30 8 10 7z" fill="#7d86e0" opacity=".6" /><rect x="10" y="15" width="19" height="20" rx="3" fill="#fff" /><path d="M31 22l6-5v16l-6-5z" fill="#fff" /></Svg>],
  ["File Explorer", <Svg w={48}><path d="M0 5q0-2 3-2h14l5 6v6H0z" fill="#d99a00" /><rect y="8" width="48" height="38" rx="2" fill="#ffc938" /><path d="M8 46V36q0-4 5-4h22q5 0 5 4v10z" fill="#0f74cc" /><path d="M14 39h20" stroke="#0a4e98" strokeWidth="2" /></Svg>],
  ["Store", <Svg w={48}><path d="M10 11V4q0-3 3-3h22q3 0 3 3v7" stroke="#1ea7ee" strokeWidth="4" /><path d="M1 8h46v34q0 6-7 6H8q-7 0-7-6z" fill="#efefef" /><path d="M13 17h10v9H13z" fill="#f25022" /><path d="M25 17h10v9H25z" fill="#7fba00" /><path d="M13 28h10v9H13z" fill="#00a4ef" /><path d="M25 28h10v9H25z" fill="#ffb900" /></Svg>],
  ["Alexa", <Svg w={48}><path d="M20 47C8 46 0 36 0 24a24 24 0 1 1 48 0c0 10-8 20-24 24 12-7 17-14 17-24a17 17 0 1 0-34 0c0 8 5 12 13 15z" fill="#00caff" /></Svg>],
  ["Typing", <Svg w={48}><path d="M0 0h48v48H0z" fill="#ff6a0a" /><text x="3" y="18" fontSize="12" fontWeight="700" fill="#fff">TYPING</text><path d="M5 24h38v17H5z" fill="#eee" /><path d="M6 28h36M6 32h36M6 36h36" stroke="#bbb" strokeDasharray="2 1" /><path d="M8 46V34l5-5 4 8-2 9zM40 46V34l-6-5-4 8 2 9z" fill="#f0b070" /></Svg>],
  ["WhatsApp", <Svg w={48}><path d="M24 0a24 24 0 1 1-11 45L0 48l3-13A24 24 0 0 1 24 0z" fill="#fff" /><circle cx="24" cy="24" r="20" fill="#45c35a" /><path d="M12 16c0-4 6-6 7-2l1 5-3 3c2 5 5 7 9 9l3-3 6 2c3 2 0 6-3 7-9 2-20-10-20-21z" fill="#fff" /></Svg>],
  ["Umbrello", <Svg w={48} h={36}><path d="M0 0h48v36H0z" fill="#f6f6f6" /><path d="M0 1.500h48" stroke="#888" strokeWidth="3" /><path d="M15 6h19v26H15z" fill="#0f78cc" /><path d="M5 7h6M5 11h6M5 15h6M5 19h6M5 23h6M5 27h6M38 7h6M38 11h6M38 15h6M38 19h6" stroke="#999" /></Svg>, true],
];

const Tasks = () => (
  <TaskBar>
    <Weather>
      <Svg w={46} h={42}>
        <defs><linearGradient id="sun" x1="0" y1="0" x2="0" y2="1"><stop stopColor="#f0ad25" /><stop offset="1" stopColor="#f26a12" /></linearGradient></defs>
        <circle cx="21" cy="21" r="20" fill="url(#sun)" />
        <path d="M21 34a6 6 0 0 1 0-9 8 8 0 0 1 15-4 7 7 0 0 1 6 13z" fill="#c3d5f6" />
      </Svg>
      <Stacked><span>30°C</span><Faint>Mostly sunny</Faint></Stacked>
    </Weather>
    <TaskIcons>
      <TaskButton aria-label="Start">
        <Svg w={46}>
          <defs><linearGradient id="win" gradientUnits="userSpaceOnUse" x1="46" y1="0" x2="0" y2="46"><stop stopColor="#7ff6ff" /><stop offset="1" stopColor="#109cff" /></linearGradient></defs>
          <path d="M0 2q0-2 2-2h20v22H0zM24 0h20q2 0 2 2v20H24zM0 24h22v22H2q-2 0-2-2zM24 24h22v20q0 2-2 2H24z" fill="url(#win)" />
        </Svg>
      </TaskButton>
      <SearchBox>
        <Svg w={30}><path d="M20 20l9 9" stroke="#e4e6e8" strokeWidth="4" /><circle cx="13" cy="13" r="11" stroke="#eef0f0" strokeWidth="3" fill="#6d7186" /></Svg>
        <SearchInput type="text" placeholder="Search" aria-label="Search" />
        <Svg w={40}><path d="M20 1a19 19 0 1 1-11 35L1 39l2-12A19 19 0 0 1 20 1z" fill="#1b78e8" /><circle cx="20" cy="20" r="16" fill="#fff" /><path d="M12 7l5 2v18l-5 3zM19 15l9 4q4 3 1 7l-12 8-5-4 11-6z" fill="#1f7fe6" /></Svg>
      </SearchBox>
      {apps.map(([name, icon, active]) => (
        <TaskButton key={name} aria-label={name} $active={active}>{icon}{active && <Indicator />}</TaskButton>
      ))}
    </TaskIcons>
    <Tray>
      <TrayItem $w={48} aria-label="Hidden icons"><Svg w={22} h={13}><path d="M1 12L11 2l10 10" stroke="#fff" strokeWidth="2.500" /></Svg></TrayItem>
      <TrayItem $w={80} aria-label="Sync">
        <Svg w={32} h={28}><path d="M6 20a7 7 0 0 1 0-13 9 9 0 0 1 17 0 7 7 0 0 1 3 12z" fill="#bfc0c5" /><circle cx="23" cy="19" r="9" fill="#fff" /><path d="M18 18a5 5 0 0 1 9-2M28 20a5 5 0 0 1-9 2" stroke="#1a6fc4" strokeWidth="2" /></Svg>
      </TrayItem>
      <TrayItem $w={72} $after={16}><Stacked $align="center"><span>ENG</span><span>IN</span></Stacked></TrayItem>
      <TrayItem $w={48} aria-label="Network">
        <Svg w={32} h={24}><path d="M1 9a21 21 0 0 1 30 0M6 14a14 14 0 0 1 20 0" stroke="#777c88" strokeWidth="2" /><path d="M10 18a8 8 0 0 1 12 0" stroke="#fff" strokeWidth="2.500" /><circle cx="16" cy="21" r="3" fill="#fff" /></Svg>
      </TrayItem>
      <TrayItem $w={48} aria-label="Volume">
        <Svg w={32} h={24}><path d="M1 8h5l8-6v20l-8-6H1z" stroke="#fff" strokeWidth="2" /><path d="M19 7l11 11M30 7L19 18" stroke="#fff" strokeWidth="2" /></Svg>
      </TrayItem>
      <TrayItem $w={48} aria-label="Battery">
        <Svg w={32} h={26}><rect x="2" y="6" width="25" height="18" rx="4" stroke="#fff" strokeWidth="2" /><path d="M6 10h17v11H6z" fill="#fff" /><path d="M28 12h3v6h-3z" fill="#fff" /><path d="M6 0L1 9h4l-1 7 7-10H6z" fill="#fff" stroke="#1a2430" /></Svg>
      </TrayItem>
      <TrayItem $w={150} $end><Stacked $align="flex-end"><span>09:13</span><span>03-08-2023</span></Stacked></TrayItem>
      <Badge>14</Badge>
    </Tray>
  </TaskBar>
);

export default function App() {
  return (
    <Viewport>
      <GlobalStyle />
      <Screen>
        <Header />
        <Workspace>
          <Docks />
          <VSplitter />
          <Diagram />
          <VSplitter />
          <Dock as={BirdDock} title={<><u>B</u>ird's ey</>}>
            <BirdView />
          </Dock>
        </Workspace>
        <Status />
        <Tasks />
      </Screen>
    </Viewport>
  );
}
